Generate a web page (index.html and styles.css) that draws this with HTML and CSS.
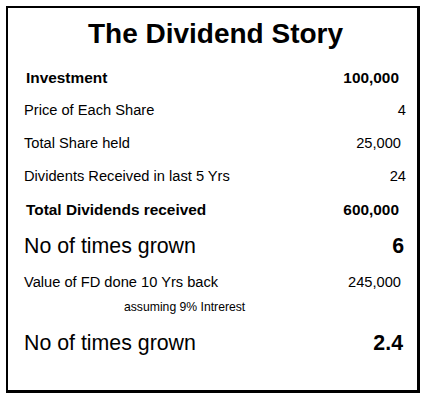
FILE: index.html
```html
<!DOCTYPE html>
<html lang="en">
<head>
<meta charset="utf-8">
<title>The Dividend Story</title>
<link rel="stylesheet" href="styles.css">
</head>
<body>
<div class="card">
  <h1 class="title">The Dividend Story</h1>
  <div class="rows">
    <div class="row row-bold">
      <span class="label">Investment</span>
      <span class="value v-bold">100,000</span>
    </div>
    <div class="row">
      <span class="label">Price of Each Share</span>
      <span class="value">4</span>
    </div>
    <div class="row">
      <span class="label">Total Share held</span>
      <span class="value v-wide">25,000</span>
    </div>
    <div class="row">
      <span class="label">Dividents Received in last 5 Yrs</span>
      <span class="value">24</span>
    </div>
    <div class="row row-bold">
      <span class="label">Total Dividends received</span>
      <span class="value v-bold">600,000</span>
    </div>
    <div class="row row-big">
      <span class="label">No of times grown</span>
      <span class="value v-big">6</span>
    </div>
    <div class="row">
      <span class="label">Value of FD done 10 Yrs back</span>
      <span class="value v-wide">245,000</span>
    </div>
    <div class="row row-note">
      <span class="note">assuming 9% Intrerest</span>
    </div>
    <div class="row row-big row-last">
      <span class="label">No of times grown</span>
      <span class="value v-big2">2.4</span>
    </div>
  </div>
</div>
</body>
</html>
```

FILE: styles.css
```css
html, body {
  margin: 0;
  padding: 0;
  background: #ffffff;
}

body {
  font-family: "Liberation Sans", Arial, sans-serif;
  color: #000000;
}

.card {
  box-sizing: border-box;
  margin: 6px 0 0 6px;
  width: 414px;
  height: 387px;
  border-style: solid;
  border-color: #000000;
  border-width: 2px 3px 3px 2px;
  display: flex;
  flex-direction: column;
}

.title {
  margin: 0;
  height: 51px;
  line-height: 51px;
  padding-left: 6px;
  text-align: center;
  font-size: 28px;
  font-weight: bold;
}

.rows {
  display: flex;
  flex-direction: column;
  padding: 2px 11px 0 16px;
}

.row {
  display: flex;
  justify-content: space-between;
  align-items: center;
  height: 33px;
  line-height: 33px;
  font-size: 14.67px;
  white-space: nowrap;
}

.row-bold {
  font-size: 15.4px;
  font-weight: bold;
}

.row-bold .label {
  padding-left: 2px;
}

.row-big {
  height: 40px;
  line-height: 40px;
  font-size: 21.33px;
}

.row-last {
  height: 56px;
  line-height: 56px;
}

.row-note {
  height: 16px;
  line-height: 16px;
  font-size: 12.2px;
  justify-content: flex-start;
}

.note {
  padding-left: 100px;
}

.value {
  text-align: right;
}

.v-wide {
  margin-right: 5px;
}

.v-bold {
  margin-right: 7px;
}

.v-big {
  font-weight: bold;
  margin-right: 2px;
}

.v-big2 {
  font-weight: bold;
  margin-right: 3px;
}
```
